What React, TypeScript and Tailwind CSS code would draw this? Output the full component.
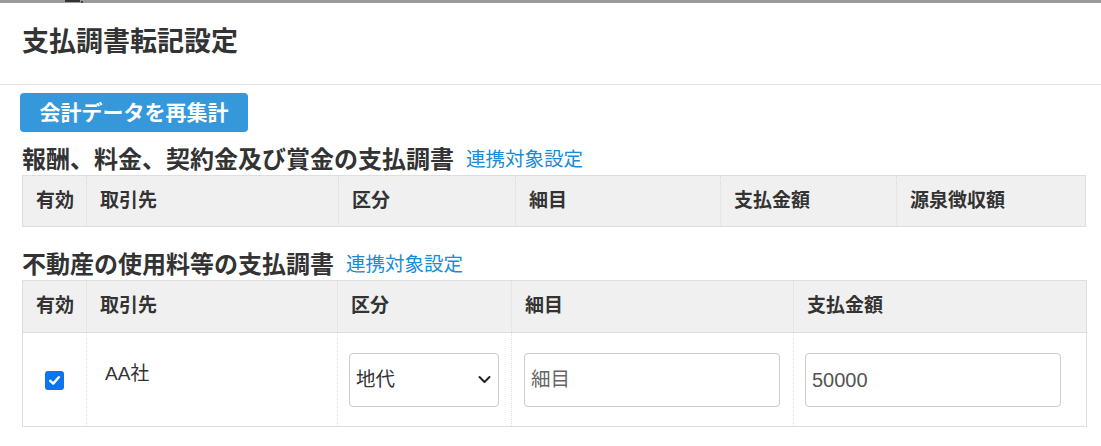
import React from "react";

const FONT = "font-['Liberation_Sans','Noto_Sans_CJK_JP',sans-serif]";

function Check() {
  return (
    <span className="inline-flex w-[19px] h-[19px] rounded-[3px] bg-[#0b75f1] items-center justify-center">
      <svg width="13" height="13" viewBox="0 0 13 13" fill="none">
        <path d="M2.2 6.8 L5.2 9.6 L10.8 3.2" stroke="white" strokeWidth="2.4" strokeLinecap="round" strokeLinejoin="round" />
      </svg>
    </span>
  );
}

export default function App() {
  const th = "pl-[13px] pr-0 text-left font-bold text-[19px] text-[#333] align-middle whitespace-nowrap";
  const dl = "border-l border-dotted border-[#dcdcdc]";
  return (
    <div className={`w-[1101px] h-[446px] overflow-hidden bg-white ${FONT} text-[#333]`}>
      <div className="h-[3px] bg-[#9a9a9a] flex items-start">
        <div className="ml-[65px] w-[15px] h-[2px] bg-[#333]" />
        <div className="ml-[1px] mt-[1px] w-[2px] h-[2px] bg-[#444]" />
      </div>
      <div className="h-[82px] flex items-center px-[22px] pb-[2px] border-b border-[#e5e5e5]">
        <h1 className="text-[27px] font-bold leading-none text-[#333]">支払調書転記設定</h1>
      </div>
      <div className="px-[22px] pt-[8px]">
        <button className="ml-[-2px] w-[228px] h-[39px] rounded-[4px] bg-[#3498db] text-white font-bold text-[21px] leading-none flex items-center justify-center">
          会計データを再集計
        </button>
        <div className="mt-[14px] h-[28px] flex items-center gap-[12px]">
          <span className="text-[24px] font-bold leading-none">報酬、料金、契約金及び賞金の支払調書</span>
          <a className="text-[19.5px] leading-none text-[#1a8bd6]">連携対象設定</a>
        </div>
        <table className="mt-[1px] w-[1064px] table-fixed border-collapse border border-[#dedede]">
          <colgroup>
            <col className="w-[64px]" />
            <col className="w-[252px]" />
            <col className="w-[177px]" />
            <col className="w-[205px]" />
            <col className="w-[176px]" />
            <col />
          </colgroup>
          <thead>
            <tr className="h-[51px] bg-[#f0f0f0]">
              <th className={th}>有効</th>
              <th className={`${th} ${dl}`}>取引先</th>
              <th className={`${th} ${dl}`}>区分</th>
              <th className={`${th} ${dl}`}>細目</th>
              <th className={`${th} ${dl}`}>支払金額</th>
              <th className={`${th} ${dl}`}>源泉徴収額</th>
            </tr>
          </thead>
        </table>
        <div className="mt-[24px] h-[28px] flex items-center gap-[12px]">
          <span className="text-[24px] font-bold leading-none">不動産の使用料等の支払調書</span>
          <a className="text-[19.5px] leading-none text-[#1a8bd6]">連携対象設定</a>
        </div>
        <table className="mt-[1px] w-[1065px] table-fixed border-collapse border border-[#dedede]">
          <colgroup>
            <col className="w-[64px]" />
            <col className="w-[251px]" />
            <col className="w-[174px]" />
            <col className="w-[282px]" />
            <col />
          </colgroup>
          <thead>
            <tr className="h-[52px] bg-[#f0f0f0] border-b border-[#dedede]">
              <th className={th}>有効</th>
              <th className={`${th} ${dl}`}>取引先</th>
              <th className={`${th} ${dl}`}>区分</th>
              <th className={`${th} ${dl}`}>細目</th>
              <th className={`${th} ${dl}`}>支払金額</th>
            </tr>
          </thead>
          <tbody>
            <tr className="h-[94px]">
              <td className="text-center align-middle p-0">
                <div className="flex justify-center pt-[2px]">
                  <Check />
                </div>
              </td>
              <td className={`${dl} align-middle pl-[18px] pb-[10px] text-[19px] text-[#333]`}>AA社</td>
              <td className={`${dl} align-middle px-[11px]`}>
                <div className="w-[150px] h-[54px] rounded-[4px] border border-[#cccccc] flex items-center justify-between pl-[6px] pr-[7px]">
                  <span className="text-[19.5px] text-[#333]">地代</span>
                  <svg width="13" height="9" viewBox="0 0 13 9" fill="none">
                    <path d="M1.5 2 L6.5 7 L11.5 2" stroke="#222" strokeWidth="2" strokeLinecap="round" strokeLinejoin="round" />
                  </svg>
                </div>
              </td>
              <td className={`${dl} align-middle pl-[12px]`}>
                <div className="w-[256px] h-[54px] rounded-[4px] border border-[#cccccc] flex items-center pl-[6px]">
                  <span className="text-[19.5px] text-[#666]">細目</span>
                </div>
              </td>
              <td className={`${dl} align-middle pl-[11px]`}>
                <div className="w-[256px] h-[54px] rounded-[4px] border border-[#cccccc] flex items-center pl-[6px]">
                  <span className="text-[20px] text-[#555]">50000</span>
                </div>
              </td>
            </tr>
          </tbody>
        </table>
      </div>
    </div>
  );
}
